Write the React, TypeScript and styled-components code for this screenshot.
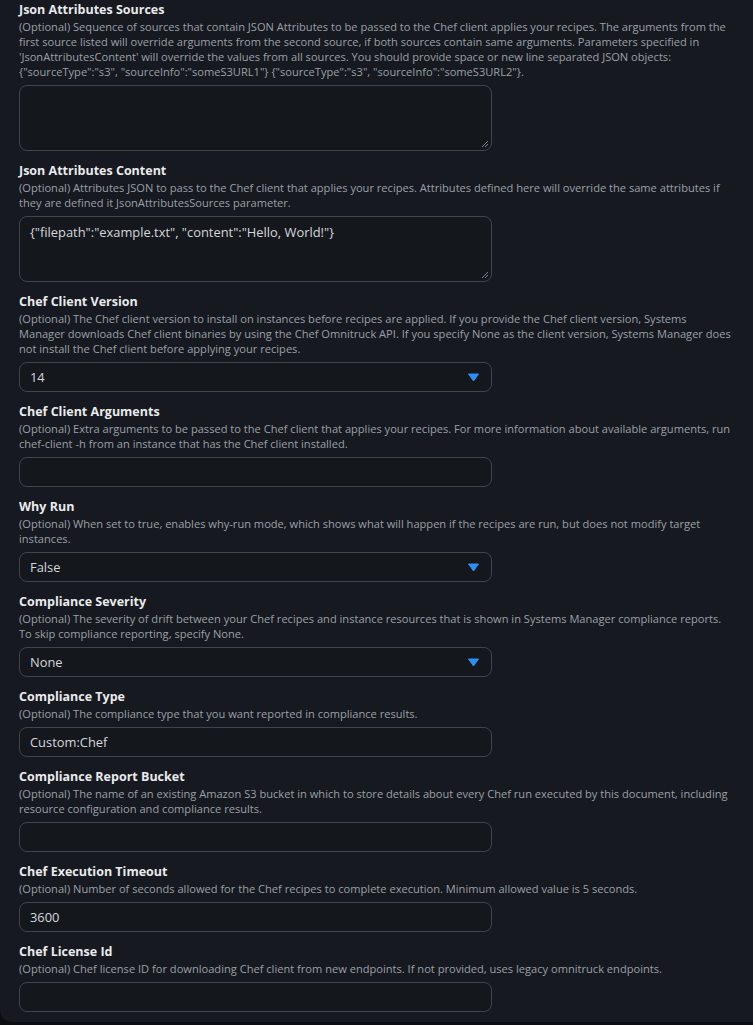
import React from "react";
import styled, { createGlobalStyle } from "styled-components";

const Global = createGlobalStyle`
  html, body {
    margin: 0;
    padding: 0;
    background: #0c0d10;
  }
  * { box-sizing: border-box; }
`;

const Panel = styled.div`
  width: 753px;
  height: 1022px;
  background: #16191f;
  border-radius: 0 0 0 12px;
  padding: 1px 12px 0 19px;
  font-family: "Open Sans", "Noto Sans", sans-serif;
  display: flex;
  flex-direction: column;
  gap: 11px;
`;

const Field = styled.div`
  display: flex;
  flex-direction: column;
`;

const Label = styled.div`
  color: #e9ebed;
  font-size: 12.5px;
  font-weight: 700;
  line-height: 18px;
`;

const Desc = styled.div`
  color: #9ba0a8;
  font-size: 11.1px;
  line-height: 15px;
  max-width: 714px;
  margin-bottom: 6px;
`;

const Box = styled.div<{ $tall?: boolean }>`
  position: relative;
  width: 473px;
  height: ${(p) => (p.$tall ? "66px" : "30px")};
  border: 1px solid #40454d;
  border-radius: 8px;
  background: #14171c;
  color: #d5d8dc;
  font-size: 12.9px;
  display: flex;
  align-items: ${(p) => (p.$tall ? "flex-start" : "center")};
  padding: ${(p) => (p.$tall ? "6px 10px" : "0 10px")};
`;

const Grip = styled.svg`
  position: absolute;
  right: 2px;
  bottom: 2px;
`;

const Caret = styled.svg`
  margin-left: auto;
  margin-right: 2px;
`;

type FieldDef = {
  label: string;
  desc: string;
  value?: string;
  kind: "area" | "text" | "select";
};

const fields: FieldDef[] = [
  {
    label: "Json Attributes Sources",
    desc:
      "(Optional) Sequence of sources that contain JSON Attributes to be passed to the Chef client applies your recipes. The arguments from the first source listed will override arguments from the second source, if both sources contain same arguments. Parameters specified in 'JsonAttributesContent' will override the values from all sources. You should provide space or new line separated JSON objects: {\"sourceType\":\"s3\", \"sourceInfo\":\"someS3URL1\"} {\"sourceType\":\"s3\", \"sourceInfo\":\"someS3URL2\"}.",
    kind: "area",
  },
  {
    label: "Json Attributes Content",
    desc:
      "(Optional) Attributes JSON to pass to the Chef client that applies your recipes. Attributes defined here will override the same attributes if they are defined it JsonAttributesSources parameter.",
    value: "{\"filepath\":\"example.txt\", \"content\":\"Hello, World!\"}",
    kind: "area",
  },
  {
    label: "Chef Client Version",
    desc:
      "(Optional) The Chef client version to install on instances before recipes are applied. If you provide the Chef client version, Systems Manager downloads Chef client binaries by using the Chef Omnitruck API. If you specify None as the client version, Systems Manager does not install the Chef client before applying your recipes.",
    value: "14",
    kind: "select",
  },
  {
    label: "Chef Client Arguments",
    desc:
      "(Optional) Extra arguments to be passed to the Chef client that applies your recipes. For more information about available arguments, run chef-client -h from an instance that has the Chef client installed.",
    kind: "text",
  },
  {
    label: "Why Run",
    desc:
      "(Optional) When set to true, enables why-run mode, which shows what will happen if the recipes are run, but does not modify target instances.",
    value: "False",
    kind: "select",
  },
  {
    label: "Compliance Severity",
    desc:
      "(Optional) The severity of drift between your Chef recipes and instance resources that is shown in Systems Manager compliance reports. To skip compliance reporting, specify None.",
    value: "None",
    kind: "select",
  },
  {
    label: "Compliance Type",
    desc: "(Optional) The compliance type that you want reported in compliance results.",
    value: "Custom:Chef",
    kind: "text",
  },
  {
    label: "Compliance Report Bucket",
    desc:
      "(Optional) The name of an existing Amazon S3 bucket in which to store details about every Chef run executed by this document, including resource configuration and compliance results.",
    kind: "text",
  },
  {
    label: "Chef Execution Timeout",
    desc:
      "(Optional) Number of seconds allowed for the Chef recipes to complete execution. Minimum allowed value is 5 seconds.",
    value: "3600",
    kind: "text",
  },
  {
    label: "Chef License Id",
    desc:
      "(Optional) Chef license ID for downloading Chef client from new endpoints. If not provided, uses legacy omnitruck endpoints.",
    kind: "text",
  },
];

function Control({ f }: { f: FieldDef }) {
  if (f.kind === "area") {
    return (
      <Box $tall>
        {f.value}
        <Grip width="8" height="8" viewBox="0 0 8 8">
          <path d="M7 1 L1 7 M7 4 L4 7" stroke="#7d838c" strokeWidth="1" />
        </Grip>
      </Box>
    );
  }
  return (
    <Box>
      {f.value}
      {f.kind === "select" && (
        <Caret width="11" height="9" viewBox="0 0 11 9">
          <path d="M0.5 1 L10.5 1 L5.5 8 Z" fill="#2c8ef8" stroke="#2c8ef8" strokeLinejoin="round" />
        </Caret>
      )}
    </Box>
  );
}

export default function App() {
  return (
    <>
      <Global />
      <Panel>
        {fields.map((f) => (
          <Field key={f.label}>
            <Label>{f.label}</Label>
            <Desc>{f.desc}</Desc>
            <Control f={f} />
          </Field>
        ))}
      </Panel>
    </>
  );
}
